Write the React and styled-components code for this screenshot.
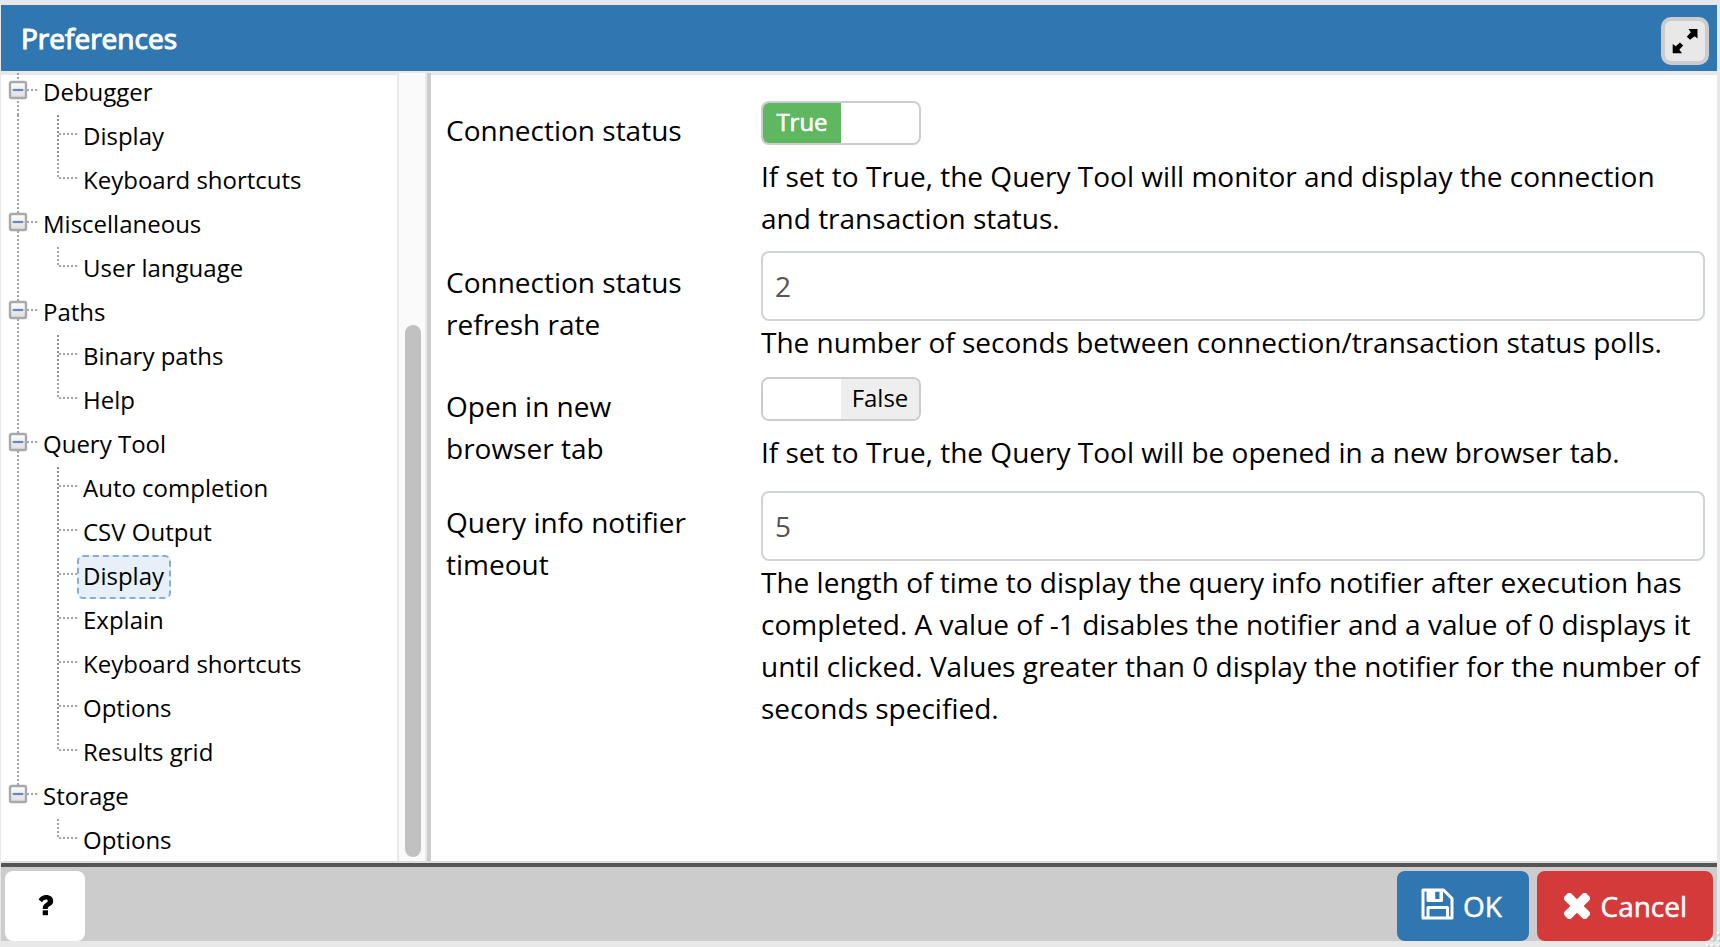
import React from "react";
import styled, { createGlobalStyle } from "styled-components";

const Global = createGlobalStyle`
  * { box-sizing: border-box; }
  body { margin: 0; background: #e8e8e8; font-family: "Open Sans", sans-serif; color: #000; }
  button, input { font-family: inherit; margin: 0; }
`;

const Dialog = styled.div`
  width: 1720px;
  height: 947px;
  padding: 5px 3px 6px 1px;
  display: flex;
  flex-direction: column;
  overflow: hidden;
  background: #e8e8e8;
`;

const Header = styled.header`
  height: 66px;
  flex: none;
  display: flex;
  align-items: center;
  justify-content: space-between;
  padding: 6px 8px 0 20px;
  background: #3076b1;
`;

const Title = styled.h1`
  margin: 0 0 6px;
  color: #fff;
  font-size: 28px;
  font-weight: 400;
  line-height: 42px;
  -webkit-text-stroke: 1.1px #fff;
`;

const MaximizeButton = styled.button`
  width: 48px;
  height: 48px;
  padding: 0;
  display: flex;
  align-items: center;
  justify-content: center;
  border: 4px solid #ccc;
  border-radius: 10px;
  background: #e8e8e8;
`;

const Body = styled.main`
  height: 790px;
  flex: none;
  display: flex;
  background: linear-gradient(#e8e8e8 4px, #fff 4px);
`;

const Tree = styled.ul`
  width: 398px;
  margin: 0;
  padding: 0;
  list-style: none;
  overflow: hidden;
  border-right: 2px solid #e8e8e8;
`;

const TreeRow = styled.li`
  height: 44px;
  display: flex;
  align-items: center;
`;

const Guides = styled.svg`
  flex: none;
  display: block;
`;

const TreeLabel = styled.span`
  height: 44px;
  padding: 0 5px 2px 4px;
  display: flex;
  align-items: center;
  border: 2px ${(p) => (p.$selected ? "dashed #84acdd" : "solid transparent")};
  border-radius: 6px;
  background: ${(p) => (p.$selected ? "#e7f0f8" : "transparent")};
  font-size: 24px;
  line-height: 36px;
  white-space: nowrap;
`;

const ScrollTrack = styled.div`
  width: 28px;
  margin-top: 2px;
  padding: 252px 4px 4px 6px;
  background: #fafafa;
  border-right: 2px solid #e8e8e8;
`;

const ScrollThumb = styled.div`
  width: 16px;
  height: 532px;
  border-radius: 8px;
  background: #c1c1c1;
`;

const Splitter = styled.div`
  width: 4px;
  margin-top: 2px;
  background: #ccc;
`;

const Form = styled.section`
  flex: 1;
  padding-top: 30px;
  display: flex;
  flex-direction: column;
`;

const FormRow = styled.div`
  height: ${(p) => p.$h}px;
  display: flex;
`;

const FieldLabel = styled.label`
  width: 330px;
  flex: none;
  padding: ${(p) => p.$top}px 60px 0 15px;
  font-size: 28px;
  line-height: 42px;
`;

const Field = styled.div`
  width: 944px;
`;

const Help = styled.p`
  margin: ${(p) => p.$gap || 0}px -12px 0 0;
  font-size: 28px;
  line-height: 42px;
  white-space: pre-line;
`;

const NumberInput = styled.input`
  width: 944px;
  height: 70px;
  display: block;
  padding: 0 12px 1px;
  border: 2px solid #ced4da;
  border-radius: 8px;
  background: #fff;
  color: #555;
  font-size: 28px;
  outline: none;
`;

const Switch = styled.div`
  width: 160px;
  height: 44px;
  display: flex;
  overflow: hidden;
  border: 2px solid #ccc;
  border-radius: 8px;
  background: #fff;
`;

const SwitchHalf = styled.span`
  width: 50%;
  flex: none;
  padding-bottom: 2px;
  display: flex;
  align-items: center;
  justify-content: center;
  font-size: 24px;
  line-height: 36px;
  color: ${(p) => (p.$kind === "on" ? "#fff" : "#000")};
  -webkit-text-stroke: ${(p) => (p.$kind === "on" ? "0.6px #fff" : "0")};
  background: ${(p) => ({ on: "#5fb760", off: "#eee" }[p.$kind] || "#fff")};
`;

const Footer = styled.footer`
  height: 80px;
  flex: none;
  padding: 4px 4px 0;
  display: flex;
  gap: 8px;
  border-top: 2px solid #ddd;
  background: linear-gradient(#555 4px, #ccc 4px);
  position: relative;
`;

const FooterButton = styled.button`
  width: ${(p) => p.$w}px;
  height: 70px;
  margin: 4px ${(p) => (p.$pushRight ? "auto" : "0")} 0 0;
  padding: 0 0 0 ${(p) => p.$inset || 0}px;
  display: flex;
  align-items: center;
  gap: ${(p) => p.$gap || 0}px;
  border: 0;
  border-radius: 8px;
  background: ${(p) => p.$bg};
  color: #fff;
  font-size: 28px;
  -webkit-text-stroke: 0.5px #fff;
`;

const Icon = styled.svg`
  display: block;
  flex: none;
  margin-bottom: ${(p) => p.$lift || 0}px;
`;

const Grip = styled.svg`
  position: absolute;
  right: -3px;
  bottom: -6px;
`;

const DOTS = { stroke: "#a3a3a3", strokeWidth: 2, strokeDasharray: "2 2" };

function Toggle() {
  return (
    <g>
      <rect x="9" y="11" width="16" height="16" rx="1.5" fill="url(#toggleFill)" stroke="#a9a9a9" strokeWidth="2.4" />
      <path d="M11.700 19H22.300" stroke="#6c85bd" strokeWidth="2.200" />
    </g>
  );
}

function RowGuides({ item }) {
  const root = item.level === 0;
  return (
    <Guides width={root ? 36 : 76} height="44" viewBox={root ? "0 0 36 44" : "0 0 76 44"}>
      {item.trunk && <path d={item.lastRoot ? "M17 0V10" : item.first ? "M17 2V44" : "M17 0V44"} {...DOTS} />}
      {root ? (
        <>
          <path d="M26 19H36" {...DOTS} />
          <Toggle />
        </>
      ) : (
        <>
          <path d={`M57 0V${item.last ? 19 : 44}`} {...DOTS} stroke={item.last ? "#a3a3a3" : "#8c8c8c"} />
          <path d="M58 19H76" {...DOTS} />
        </>
      )}
    </Guides>
  );
}

const ITEMS = [
  { label: "Debugger", level: 0, trunk: true, first: true },
  { label: "Display", level: 1, trunk: true },
  { label: "Keyboard shortcuts", level: 1, trunk: true, last: true },
  { label: "Miscellaneous", level: 0, trunk: true },
  { label: "User language", level: 1, trunk: true, last: true },
  { label: "Paths", level: 0, trunk: true },
  { label: "Binary paths", level: 1, trunk: true },
  { label: "Help", level: 1, trunk: true, last: true },
  { label: "Query Tool", level: 0, trunk: true },
  { label: "Auto completion", level: 1, trunk: true },
  { label: "CSV Output", level: 1, trunk: true },
  { label: "Display", level: 1, trunk: true, selected: true },
  { label: "Explain", level: 1, trunk: true },
  { label: "Keyboard shortcuts", level: 1, trunk: true },
  { label: "Options", level: 1, trunk: true },
  { label: "Results grid", level: 1, trunk: true, last: true },
  { label: "Storage", level: 0, trunk: true, lastRoot: true },
  { label: "Options", level: 1, last: true },
];

const GRIP_DOTS = [[12, 2], [6, 8], [12, 8], [1, 14], [6, 14], [12, 14]];

export default function App() {
  return (
    <Dialog>
      <Global />
      <Header>
        <Title>Preferences</Title>
        <MaximizeButton aria-label="Maximize">
          <Icon width="40" height="40" viewBox="0 0 40 40">
            <path
              d="M23.500 8H32.500V17.500L29.800 15.300 25 18.800 21.800 15.800 25.800 11.300zM18.200 24.500L14.300 28.700 17 32.300H7.700V23L10.800 25.200 15 21.500z"
              fill="#000"
            />
          </Icon>
        </MaximizeButton>
      </Header>
      <Body>
        <Tree>
          {ITEMS.map((item, i) => (
            <TreeRow key={i}>
              {i === 0 && (
                <svg width="0" height="0">
                  <linearGradient id="toggleFill" x1="0" y1="0" x2="0" y2="1">
                    <stop offset="0" stopColor="#fff" />
                    <stop offset="1" stopColor="#ddd" />
                  </linearGradient>
                </svg>
              )}
              <RowGuides item={item} />
              <TreeLabel $selected={item.selected}>{item.label}</TreeLabel>
            </TreeRow>
          ))}
        </Tree>
        <ScrollTrack>
          <ScrollThumb />
        </ScrollTrack>
        <Splitter />
        <Form>
          <FormRow $h={150}>
            <FieldLabel $top={8}>Connection status</FieldLabel>
            <Field>
              <Switch>
                <SwitchHalf $kind="on">True</SwitchHalf>
                <SwitchHalf />
              </Switch>
              <Help $gap={10}>{"If set to True, the Query Tool will monitor and display the connection\nand transaction status."}</Help>
            </Field>
          </FormRow>
          <FormRow $h={126}>
            <FieldLabel $top={10}>Connection status refresh rate</FieldLabel>
            <Field>
              <NumberInput defaultValue="2" />
              <Help>The number of seconds between connection/transaction status polls.</Help>
            </Field>
          </FormRow>
          <FormRow $h={114}>
            <FieldLabel $top={8}>Open in new browser tab</FieldLabel>
            <Field>
              <Switch>
                <SwitchHalf />
                <SwitchHalf $kind="off">False</SwitchHalf>
              </Switch>
              <Help $gap={10}>If set to True, the Query Tool will be opened in a new browser tab.</Help>
            </Field>
          </FormRow>
          <FormRow $h={240}>
            <FieldLabel $top={10}>Query info notifier timeout</FieldLabel>
            <Field>
              <NumberInput defaultValue="5" />
              <Help>
                {"The length of time to display the query info notifier after execution has\ncompleted. A value of -1 disables the notifier and a value of 0 displays it\nuntil clicked. Values greater than 0 display the notifier for the number of\nseconds specified."}
              </Help>
            </Field>
          </FormRow>
        </Form>
      </Body>
      <Footer>
        <FooterButton $w={80} $bg="#fff" $pushRight aria-label="Help">
          <Icon width="80" height="70" viewBox="0 0 80 70">
            <path d="M37 31.200L33.600 28.500C35.200 25.500 38 24 41.200 24c4 0 7 2.200 7 6 0 3.500-2.500 4.500-4.200 5.600-.8.600-1.300 1-1.300 2.400h-5c0-3.500 1.300-4.700 3.200-6 1.200-.8 1.800-1.200 1.800-2.200 0-1.800-3.500-2-5.700 1.400z" fill="#000" />
            <path d="M37.700 39.300h5.300V44.200h-5.300z" fill="#000" />
          </Icon>
        </FooterButton>
        <FooterButton $w={132} $bg="#3076b1" $inset={24} $gap={9}>
          <Icon $lift={4} width="33" height="32" viewBox="0 0 33 32">
            <path
              d="M2 2H22.500L31 10.500V30H2z M7 30V19.500H26.500V30"
              fill="none"
              stroke="#fff"
              strokeWidth="3"
              strokeLinejoin="round"
            />
            <path fillRule="evenodd" d="M5.500 2H22V12.500Q22 14 20.500 14H7Q5.500 14 5.500 12.500z M14.200 3.500V11H18.500V3.500z" fill="#fff" />
          </Icon>
          OK
        </FooterButton>
        <FooterButton $w={176} $bg="#d43a3a" $inset={26.5} $gap={11}>
          <Icon width="26" height="26" viewBox="-13 -13 26 26">
            <rect x="-15.500" y="-4.700" width="31" height="9.400" rx="3" transform="rotate(45)" fill="#fff" />
            <rect x="-15.500" y="-4.700" width="31" height="9.400" rx="3" transform="rotate(-45)" fill="#fff" />
          </Icon>
          Cancel
        </FooterButton>
        <Grip width="14" height="16" viewBox="0 0 14 16">
          {GRIP_DOTS.map(([x, y]) => (
            <g key={`${x}-${y}`}>
              <circle cx={x + 1} cy={y + 1} r="1.600" fill="#c4c4c4" />
              <circle cx={x} cy={y} r="1.500" fill="#fafafa" />
            </g>
          ))}
        </Grip>
      </Footer>
    </Dialog>
  );
}
